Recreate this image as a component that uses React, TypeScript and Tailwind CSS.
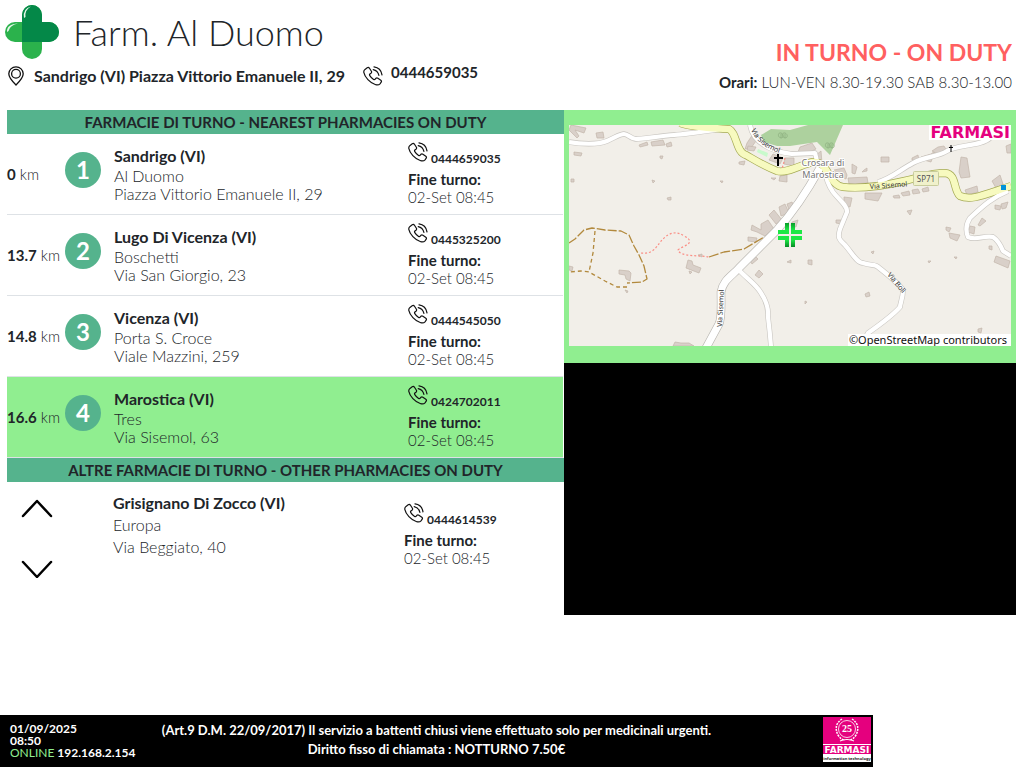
type Pharmacy = { km: string; city: string; name: string; street: string; phone: string };

const nearest: Pharmacy[] = [
  { km: "0", city: "Sandrigo (VI)", name: "Al Duomo", street: "Piazza Vittorio Emanuele II, 29", phone: "0444659035" },
  { km: "13.7", city: "Lugo Di Vicenza (VI)", name: "Boschetti", street: "Via San Giorgio, 23", phone: "0445325200" },
  { km: "14.8", city: "Vicenza (VI)", name: "Porta S. Croce", street: "Viale Mazzini, 259", phone: "0444545050" },
  { km: "16.6", city: "Marostica (VI)", name: "Tres", street: "Via Sisemol, 63", phone: "0424702011" },
];

function PhoneIcon() {
  return (
    <svg className="size-5 shrink-0" viewBox="0 0 20 20" fill="none" stroke="#111" strokeWidth="1.2" strokeLinecap="round" strokeLinejoin="round" aria-hidden="true">
      <path d="M2 3.4 4.2 1.8Q5.6 1 6.5 2.3L8.4 5.3Q9 6.4 8 7.2L6.9 8Q6.2 8.7 6.8 9.6 8.3 12 10.6 13.5 11.6 14 12.2 13.2L12.9 12.3Q13.8 11.5 14.9 12.2L17.8 14.2Q18.9 15 18.2 16.2L17 17.8Q15.5 19.5 12.7 18.7 8.3 17.3 4.9 13.6 1.5 9.8.8 6.3.6 4.5 2 3.4Z" />
      <path d="M11 .9Q17.800 1.800 19 8.800M10.200 3.600Q14.800 4.600 15.900 9.400" />
    </svg>
  );
}

function PinIcon() {
  return (
    <svg className="h-5 w-4 shrink-0" viewBox="0 0 16 20" fill="none" stroke="#111" strokeWidth="1.3" aria-hidden="true">
      <path d="M8 19Q.8 12 .8 7.8a7.2 7 0 0 1 14.4 0Q15.2 12 8 19Z" />
      <circle cx="8" cy="7.8" r="4.4" />
    </svg>
  );
}

function PharmacyCross() {
  return (
    <svg className="size-[54px] shrink-0" viewBox="0 0 54 54" aria-hidden="true">
      <rect x="17" y="0" width="20" height="54" rx="10" fill="#2bb24c" />
      <rect x="0" y="17" width="54" height="20" rx="10" fill="#2bb24c" />
      <path d="M17 37V10a10 10 0 0 1 20 0v7h7a10 10 0 0 1 0 20Z" fill="#048848" />
      <path d="M19 13Q17.500 3.500 26 1.500 19.500 5 20.500 12ZM2 27Q1.500 19 13 18.500 5 20 3.500 26Z" fill="#e4f7e8" />
    </svg>
  );
}

const buildings = [
  "571,125 586,128 584,133 575,130 579,136 577,138 569,130", "596,133 603,132 604,138 597,138",
  "639,145 647,142 648,145 640,147", "651,142 663,140 665,145 652,146", "666,144 671,142 672,146 667,147",
  "574,152 582,153 581,156 574,155", "660,156 663,156 662,159 660,158", "571,179 574,179 574,182 571,182",
  "652,180 655,181 653,183", "667,198 671,197 671,200 668,200", "739,162 745,161 744,165 739,164",
  "753,134 747,143 745,149 751,148 756,141", "748,146 756,147 754,151 747,150", "773,154 783,158 780,164 769,160",
  "785,158 794,158 794,166 784,164", "780,176 787,175 787,182 779,181", "771,178 776,178 774,180",
  "800,147 812,143 816,149 808,153 798,152", "834,170 844,168 847,175 846,179 836,176",
  "852,164 857,167 855,174 852,173", "864,170 867,168 867,171 862,172", "848,178 867,177 868,183 849,184",
  "912,158 918,155 919,161 912,160", "921,157 931,154 935,151 931,162 924,160", "932,151 938,147 944,146 947,151 938,154",
  "881,157 889,157 889,162 881,162", "961,157 967,158 970,177 961,178 959,172", "865,193 882,193 878,201 865,199",
  "893,196 899,195 900,198 894,198", "901,193 909,191 910,195 903,196", "912,190 918,189 920,193 913,194",
  "922,189 928,187 929,191 923,192", "844,197 852,198 850,207 844,205", "836,220 841,220 841,224 836,223",
  "965,190 977,186 978,192 967,195", "992,181 1000,175 1003,184 996,188", "1006,146 1011,144 1011,153 1007,153",
  "995,205 1001,206 1000,210 995,209", "1001,204 1008,202 1006,208 1002,209", "978,225 982,218 986,221 980,226",
  "970,226 975,227 974,234 968,232", "949,233 960,235 957,241 950,238", "989,246 992,246 992,250 989,249",
  "996,256 1010,261 1008,268 994,262", "946,227 951,228 949,232 946,230", "907,211 912,210 910,215",
  "787,204 792,202 796,210 790,213", "779,207 785,204 789,213 781,216", "769,215 774,210 782,220 776,224",
  "761,224 768,220 774,229 765,236 757,232 751,230 752,225 761,230", "748,237 757,238 756,242 748,241",
  "749,259 754,255 758,259 752,264", "755,275 759,270 763,274 759,278", "787,262 791,260 791,263",
  "619,270 629,271 631,273 630,281 626,279 625,275 619,274", "688,260 692,261 693,265 701,268 699,273 686,268",
  "689,271 692,272 690,274", "698,255 702,254 702,257", "625,290 628,291 627,293", "569,266 573,267 572,271 569,270",
  "675,342 681,343 689,343 694,346 673,346", "808,260 812,260 812,265 808,264", "865,294 869,292 870,296 866,297",
  "978,329 982,328 981,333 978,332", "871,252 874,251 873,254", "928,261 931,261 929,263", "954,257 957,257 956,259",
  "816,155 821,151 822,163 815,164", "792,222 798,220 796,227 791,226", "720,181 723,181 722,183", "805,301 807,302 805,304",
];

const whiteRoads = [
  "M569 142C580 144 598 145 607 141S620 134 624 134s7 5 12 5 25-3 38-4 33-4 54-7",
  "M878 182C890 179 900 170 913 163S938 157 947 151s35-5 43-13 9-8 12-13",
  "M1008 191C991 198 982 207 970 218q-6 9-2 19c8 4 16-2 25 0q6 4 10 14l8 5",
  "M750 125C753 143 770 151 792 154l23-1 3 12",
  "M825 170q1 12 8 22c6 8 15 14 14 20l-7 17c-3 10 0 11 5 16 7 8 12 18 18 18 8 3 12 1 15 4 9 7 20 16 25 23 0 8-3 14-3 17-7 8-22 19-32 26l-7 13",
  "M738 269c9 10 18 15 23 24q8 12 7 24 2 16 3 30",
];

const mainRoad = "M820 168C809 188 797 208 777 230L739 268c-7 8-16 12-18 24 0 10 1 26-2 32l-13 24";
const yellowRoad = "M680 123C695 128 716 128 729 129 737 133 736 153 746 155c12 7 18 11 31 16 10 3 25-7 36-9 16-1 15 23 30 25 18 2 44-2 61-6 18-4 26-8 41-8 12 1 8 17 15 23 11 5 23-1 51-10";

function TownMap() {
  return (
    <svg className="block w-full" viewBox="569 125 442 221" role="img" aria-label="Map of Crosara di Marostica">
      <rect x="569" y="125" width="442" height="221" fill="#f2efe9" />
      <path d="M761 135 771 129 790 130 808 125H843L830 155 817 142 790 146 777 146 764 142Z" fill="#add19e" />
      <path d="M758 149 768 153 767 157 757 152Z" fill="#c8facc" />
      <g fill="#d9d0c9" stroke="#c3b6ab" strokeWidth=".7">
        {buildings.map((b) => <polygon key={b} points={b} />)}
      </g>
      <g fill="none" strokeLinejoin="round">
        <g stroke="#c9c6c1" strokeWidth="5.400">{whiteRoads.map((d) => <path key={d} d={d} />)}</g>
        <path d={mainRoad} stroke="#b9b6b1" strokeWidth="8.500" />
        <path d={yellowRoad} stroke="#a5aa55" strokeWidth="8" />
        <g stroke="#fff" strokeWidth="4.200">{whiteRoads.map((d) => <path key={d} d={d} />)}</g>
        <path d={mainRoad} stroke="#fff" strokeWidth="7.200" />
        <path d={yellowRoad} stroke="#f7fabf" strokeWidth="6.600" />
        <g stroke="#b2893d" strokeWidth="1.300">
          <path d="M569 243 575 239 584 230 592 228 605 230 621 231 629 235 634 246 639 255 644 266 647 279 642 282 627 283" strokeDasharray="9 2" />
          <path d="M627 287H617L605 281 589 272 581 271 569 272M595 231 593 253 589 272" strokeDasharray="4 3" />
          <path d="M709 257 724 252 744 249 764 237" strokeDasharray="10 2" />
        </g>
        <path d="M641 253C655 255 658 243 663 239 670 232 677 231 684 236 698 243 682 246 678 250 680 257 699 255 709 257M785 158 782 169" stroke="#fa8f86" strokeWidth="1.200" strokeDasharray="2 2" />
      </g>
      <path d="M777 154h2v3h4v2h-4v7h-2v-7h-3v-2h3Z" fill="#000" />
      <path d="M951 145v7M949 147.500h4" stroke="#000" />
      <path d="M781 134v4m0 0c-4-1-3-6 0-5s3 5 0 5m4-4v4m0 0c-4-1-3-6 0-5s3 5 0 5M828 144v4m0 0c-4-1-3-6 0-5s3 5 0 5m4-4v4m0 0c-4-1-3-6 0-5s3 5 0 5" fill="none" stroke="#8aac7c" strokeWidth=".7" />
      <rect x="1001" y="185" width="5" height="5" fill="#0092da" />
      <defs>
        <path id="sisemol-north" d="M751 130Q757 145 779 153" />
        <linearGradient id="cross" x2="0" y2="1">
          <stop stopColor="#0a9b2a" /><stop offset=".3" stopColor="#1ce845" /><stop offset=".7" stopColor="#1ce845" /><stop offset="1" stopColor="#078925" />
        </linearGradient>
      </defs>
      <g className="font-['Noto_Sans',sans-serif]" fill="#333">
        <text fontSize="7"><textPath href="#sisemol-north">Via Sisemol</textPath></text>
        <text x="870" y="189" fontSize="7" transform="rotate(-4 870 189)">Via Sisemol</text>
        <text x="722" y="327" fontSize="7" transform="rotate(-87 722 327)">Via Sisemol</text>
        <text x="887" y="275" fontSize="7" transform="rotate(50 887 275)">Via Boli</text>
        <g fontSize="9" textAnchor="middle" fill="#777" stroke="#fff" strokeWidth="2" paintOrder="stroke">
          <text x="823" y="166">Crosara di</text>
          <text x="823" y="178">Marostica</text>
        </g>
        <rect x="913.500" y="171.500" width="25" height="14" rx="1" fill="#f0f1cb" stroke="#c8cc9c" />
        <text x="926" y="182" fontSize="8" textAnchor="middle" fill="#555">SP71</text>
        <rect x="848" y="334" width="163" height="12" fill="#fff" />
        <text x="1007" y="344" fontSize="11" textAnchor="end" fill="#111">©OpenStreetMap contributors</text>
      </g>
      <path d="M785 223h4v11h-11v-4h7ZM791 223h4v7h7v4h-11ZM778 236h11v11h-4v-7h-7ZM791 236h11v4h-7v7h-4Z" fill="url(#cross)" />
      <rect x="929" y="125" width="82" height="15" fill="#fff" />
      <text x="1010" y="138" fontSize="16" textAnchor="end" fill="#e5007e" className="font-['DejaVu_Sans',sans-serif] font-bold">FARMASI</text>
    </svg>
  );
}

function FarmasiBadge() {
  return (
    <svg className="h-[45px] w-12" viewBox="0 0 48 45" role="img" aria-label="Farmasi information technology">
      <rect width="48" height="45" fill="#fff" />
      <rect width="48" height="37" fill="#e5007e" />
      <g fill="none" stroke="#fff">
        <circle cx="24" cy="12" r="8.500" strokeWidth=".8" />
        <path d="M19 2Q10 8 15 18q3 5 7 5M29 2q9 6 4 16-3 5-7 5" strokeWidth="1.500" strokeDasharray="2 1" />
        <path d="M17 24q7-3 14 0" strokeWidth="1.200" />
      </g>
      <text x="24" y="15" fontSize="10" textAnchor="middle" fill="#fff" className="font-['Liberation_Serif',serif]">25</text>
      <rect y="27" width="48" height="1" fill="#fff" />
      <text x="24" y="36" fontSize="9" textAnchor="middle" fill="#fff" className="font-['DejaVu_Sans',sans-serif] font-bold">FARMASI</text>
      <text x="24" y="43" fontSize="4" textAnchor="middle" fill="#222" className="font-['Noto_Sans',sans-serif]">information technology</text>
    </svg>
  );
}

function Shift({ phone }: { phone: string }) {
  return (
    <div className="text-[15px] leading-[18px]">
      <div className="flex h-7 items-start gap-[3px]">
        <PhoneIcon />
        <span className="pt-2 text-[12px] font-bold">{phone}</span>
      </div>
      <p className="font-bold">Fine turno:</p>
      <p className="font-light">02-Set 08:45</p>
    </div>
  );
}

export default function App() {
  return (
    <div className="flex min-h-screen flex-col bg-white font-['Lato',sans-serif] text-[16px] text-[#212529]">
      <header className="flex h-[110px] justify-between pr-3 pl-[5px]">
        <div>
          <div className="flex h-16 items-center gap-[14px]">
            <PharmacyCross />
            <h1 className="text-[36px] leading-10 font-light">Farm. Al Duomo</h1>
          </div>
          <div className="flex items-center pt-0.5 pl-[3px] leading-5">
            <PinIcon />
            <address className="pl-2.5 font-bold not-italic">Sandrigo (VI) Piazza Vittorio Emanuele II, 29</address>
            <div className="flex pl-[18px]">
              <PhoneIcon />
              <span className="-mt-1 pl-2 text-[15px] font-bold">0444659035</span>
            </div>
          </div>
        </div>
        <div className="pt-9 text-right">
          <p className="text-[23px] leading-8 font-bold text-[#ff6060]">IN TURNO - ON DUTY</p>
          <p className="pt-1 text-[15px] leading-5 font-light"><strong className="font-bold">Orari:</strong> LUN-VEN 8.30-19.30 SAB 8.30-13.00</p>
        </div>
      </header>

      <main className="grid grid-cols-[557fr_452fr] pr-2 pl-[7px]">
        <section>
          <h2 className="bg-[#55b38d] text-center text-[15px] leading-6 font-bold">FARMACIE DI TURNO - NEAREST PHARMACIES ON DUTY</h2>
          <ol>
            {nearest.map((p, i) => (
              <li key={p.phone} className={`mr-px grid h-[81px] grid-cols-[58px_49px_1fr_155px] border-b border-[#dee2e6] ${i === 3 ? "bg-[#90ee90]" : ""}`}>
                <p className="pt-[30px] text-[15px] leading-5 font-light whitespace-nowrap"><b className="font-bold">{p.km}</b> km</p>
                <span className="mt-[18px] flex size-9 items-center justify-center rounded-full bg-[#55b38d] text-[24px] font-bold text-white">{i + 1}</span>
                <div className="pt-3 leading-[18px] font-light">
                  <h3 className="pb-px leading-5 font-bold">{p.city}</h3>
                  <p>{p.name}</p>
                  <p>{p.street}</p>
                </div>
                <div className="pt-2"><Shift phone={p.phone} /></div>
              </li>
            ))}
          </ol>
          <h2 className="bg-[#55b38d] text-center text-[15px] leading-6 font-bold">ALTRE FARMACIE DI TURNO - OTHER PHARMACIES ON DUTY</h2>
          <div className="grid grid-cols-[106px_1fr_160px]">
            <div className="flex flex-col items-start gap-10 pt-4 pl-3.5">
              <button type="button" aria-label="Previous">
                <svg className="block h-5 w-8" viewBox="0 0 32 20" fill="none" stroke="#000" strokeWidth="2.500" strokeLinecap="round" strokeLinejoin="round"><path d="M2 18 16 3 30 18" /></svg>
              </button>
              <button type="button" aria-label="Next">
                <svg className="block h-5 w-8" viewBox="0 0 32 20" fill="none" stroke="#000" strokeWidth="2.500" strokeLinecap="round" strokeLinejoin="round"><path d="M2 4 16 19 30 4" /></svg>
              </button>
            </div>
            <div className="pt-2.5 leading-[22px] font-light">
              <h3 className="font-bold">Grisignano Di Zocco (VI)</h3>
              <p>Europa</p>
              <p>Via Beggiato, 40</p>
            </div>
            <div className="pt-[21px]"><Shift phone="0444614539" /></div>
          </div>
        </section>
        <aside className="flex flex-col">
          <div className="bg-[#90ee90] px-[5px] pt-[15px] pb-[17px]"><TownMap /></div>
          <div className="h-[252px] bg-black" />
        </aside>
      </main>

      <footer className="mt-auto mb-px grid h-[52px] w-[873px] max-w-full grid-cols-[150px_1fr_150px] bg-black text-[13px] font-bold text-white">
        <div className="pt-2 pl-2.5 text-[12px] leading-3">
          <p>01/09/2025</p>
          <p>08:50</p>
          <p><span className="font-normal text-[#90ee90]">ONLINE</span> 192.168.2.154</p>
        </div>
        <div className="pt-1.5 text-center leading-[19px] whitespace-nowrap">
          <p>(Art.9 D.M. 22/09/2017) Il servizio a battenti chiusi viene effettuato solo per medicinali urgenti.</p>
          <p>Diritto fisso di chiamata : NOTTURNO 7.50€</p>
        </div>
        <div className="flex justify-end pt-0.5 pr-0.5"><FarmasiBadge /></div>
      </footer>
    </div>
  );
}
